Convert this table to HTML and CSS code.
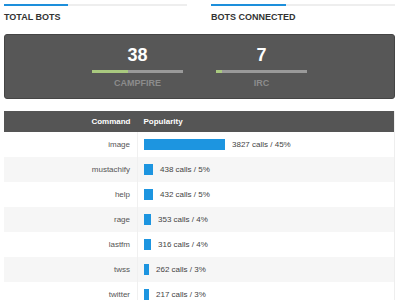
FILE: index.html
```html
<!DOCTYPE html>
<html>
<head>
<meta charset="utf-8">
<link rel="stylesheet" href="styles.css">
</head>
<body>
<div class="top">
  <div class="metric">
    <div class="track"><div class="fill" style="width:35%"></div></div>
    <div class="label">TOTAL BOTS</div>
  </div>
  <div class="metric">
    <div class="track"><div class="fill" style="width:41%"></div></div>
    <div class="label">BOTS CONNECTED</div>
  </div>
</div>
<div class="panel">
  <div class="stat">
    <div class="num">38</div>
    <div class="sbar"><div class="sfill" style="width:40%"></div></div>
    <div class="sname">CAMPFIRE</div>
  </div>
  <div class="stat">
    <div class="num">7</div>
    <div class="sbar"><div class="sfill" style="width:7%"></div></div>
    <div class="sname">IRC</div>
  </div>
</div>
<table class="cmds">
  <thead>
    <tr><th class="c1">Command</th><th class="c2">Popularity</th></tr>
  </thead>
  <tbody>
    <tr><td class="c1">image</td><td class="c2"><span class="bar" style="width:81px"></span>3827 calls / 45%</td></tr>
    <tr><td class="c1">mustachify</td><td class="c2"><span class="bar" style="width:9px"></span>438 calls / 5%</td></tr>
    <tr><td class="c1">help</td><td class="c2"><span class="bar" style="width:9px"></span>432 calls / 5%</td></tr>
    <tr><td class="c1">rage</td><td class="c2"><span class="bar" style="width:7px"></span>353 calls / 4%</td></tr>
    <tr><td class="c1">lastfm</td><td class="c2"><span class="bar" style="width:7px"></span>316 calls / 4%</td></tr>
    <tr><td class="c1">twss</td><td class="c2"><span class="bar" style="width:5px"></span>262 calls / 3%</td></tr>
    <tr><td class="c1">twitter</td><td class="c2"><span class="bar" style="width:5px"></span>217 calls / 3%</td></tr>
  </tbody>
</table>
</body>
</html>
```
FILE: styles.css
```css
html, body {
  margin: 0;
  background: #fff;
}
body {
  padding: 4px 5px 0 4px;
  font-family: "Liberation Sans", Arial, sans-serif;
  color: #333;
}
.top {
  display: grid;
  grid-template-columns: 183px 184px;
  column-gap: 24px;
}
.track {
  height: 2px;
  background: #eeeeee;
}
.fill {
  height: 100%;
  background: #1d8fdb;
}
.label {
  margin-top: 6px;
  font-size: 9px;
  line-height: 11px;
  font-weight: bold;
  color: #333;
}
.panel {
  margin-top: 11px;
  background: #575757;
  border: 1px solid #454545;
  border-radius: 3px;
  padding: 10px 0 9px;
  display: flex;
  justify-content: center;
  gap: 33px;
}
.stat {
  width: 91px;
  text-align: center;
}
.num {
  font-size: 18px;
  line-height: 20px;
  font-weight: bold;
  color: #fff;
}
.sbar {
  margin-top: 5px;
  height: 3px;
  background: #9a9a9a;
}
.sfill {
  height: 100%;
  background: #a9c97f;
}
.sname {
  margin-top: 5px;
  font-size: 9px;
  line-height: 11px;
  font-weight: bold;
  color: #8c8c8c;
}
.cmds {
  margin-top: 12px;
  width: 100%;
  border-collapse: collapse;
  font-size: 8px;
  border-right: 1px solid #eee;
}
.cmds th {
  background: #555;
  color: #fff;
  font-weight: bold;
  height: 21px;
  padding: 0;
}
.cmds td {
  height: 25px;
  padding: 0;
  color: #555;
}
.cmds .c1 {
  width: 126px;
  text-align: right;
  padding-right: 7px;
}
.cmds .c2 {
  text-align: left;
  padding-left: 6px;
}
.cmds td.c2 {
  border-left: 1px solid #f0f0f0;
  color: #444;
}
.cmds tbody tr:nth-child(even) td {
  background: #f6f6f6;
}
.bar {
  display: inline-block;
  height: 11px;
  background: #1d95e0;
  vertical-align: middle;
  margin-right: 7px;
}
```
